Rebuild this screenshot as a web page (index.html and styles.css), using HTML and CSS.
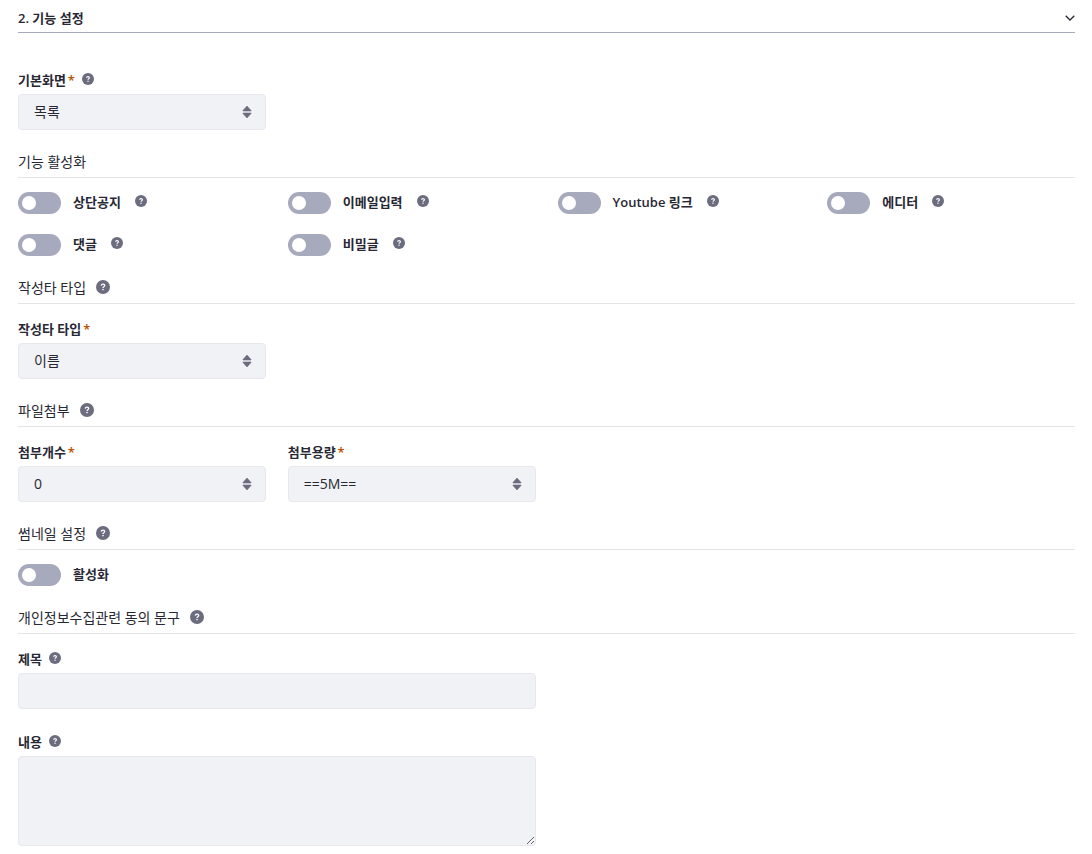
FILE: index.html
```
<!DOCTYPE html>
<html lang="ko">
<head>
<meta charset="utf-8">
<title>기능 설정</title>
<meta name="viewport" content="width=device-width, initial-scale=1">
<link rel="stylesheet" href="styles.css">
</head>
<body>
<svg class="sprite" aria-hidden="true">
  <symbol id="help" viewBox="0 0 14 14">
    <circle cx="7" cy="7" r="7" fill="#6b6c7e"/>
    <path d="M5.300 5.600C5.400 4.600 6.100 4.200 7 4.200S8.700 4.700 8.700 5.600C8.700 6.700 7 6.700 7 7.900" fill="none" stroke="#fff" stroke-width="1.300"/>
    <circle cx="7" cy="9.600" r=".8" fill="#fff"/>
  </symbol>
  <symbol id="carets" viewBox="0 0 10 14">
    <path d="M5 1 9 5.500V6H1v-.5zM5 13 9 8.500V8H1v.5z" fill="#6b6c7e" stroke="#6b6c7e" stroke-width=".6" stroke-linejoin="round"/>
  </symbol>
</svg>
<form class="panel">
  <button class="panel-header" type="button" aria-expanded="true">
    <span>2. 기능 설정</span>
    <svg class="chevron" viewBox="0 0 10 6" aria-hidden="true"><path d="M.7.7 5 5 9.300.7" fill="none" stroke="#272833" stroke-width="1.300"/></svg>
  </button>

  <div class="field-grid first">
    <div class="field">
      <label class="label" for="view">기본화면<span class="required">*</span><svg class="help"><use href="#help"/></svg></label>
      <div class="select-wrap"><select class="control" id="view"><option>목록</option></select><svg class="carets"><use href="#carets"/></svg></div>
    </div>
  </div>

  <h3 class="heading">기능 활성화</h3>
  <div class="toggle-grid">
    <label class="toggle"><input class="switch" type="checkbox"><span class="toggle-text">상단공지<svg class="help"><use href="#help"/></svg></span></label>
    <label class="toggle"><input class="switch" type="checkbox"><span class="toggle-text">이메일입력<svg class="help"><use href="#help"/></svg></span></label>
    <label class="toggle"><input class="switch" type="checkbox"><span class="toggle-text">Youtube 링크<svg class="help"><use href="#help"/></svg></span></label>
    <label class="toggle"><input class="switch" type="checkbox"><span class="toggle-text">에디터<svg class="help"><use href="#help"/></svg></span></label>
    <label class="toggle"><input class="switch" type="checkbox"><span class="toggle-text">댓글<svg class="help"><use href="#help"/></svg></span></label>
    <label class="toggle"><input class="switch" type="checkbox"><span class="toggle-text">비밀글<svg class="help"><use href="#help"/></svg></span></label>
  </div>

  <h3 class="heading">작성타 타입<svg class="help"><use href="#help"/></svg></h3>
  <div class="field-grid">
    <div class="field">
      <label class="label" for="writer">작성타 타입<span class="required">*</span></label>
      <div class="select-wrap"><select class="control" id="writer"><option>이름</option></select><svg class="carets"><use href="#carets"/></svg></div>
    </div>
  </div>

  <h3 class="heading">파일첨부<svg class="help"><use href="#help"/></svg></h3>
  <div class="field-grid">
    <div class="field">
      <label class="label" for="count">첨부개수<span class="required">*</span></label>
      <div class="select-wrap"><select class="control" id="count"><option>0</option></select><svg class="carets"><use href="#carets"/></svg></div>
    </div>
    <div class="field">
      <label class="label" for="size">첨부용량<span class="required">*</span></label>
      <div class="select-wrap"><select class="control" id="size"><option>==5M==</option></select><svg class="carets"><use href="#carets"/></svg></div>
    </div>
  </div>

  <h3 class="heading">썸네일 설정<svg class="help"><use href="#help"/></svg></h3>
  <div class="toggle-grid">
    <label class="toggle"><input class="switch" type="checkbox"><span class="toggle-text">활성화</span></label>
  </div>

  <h3 class="heading">개인정보수집관련 동의 문구<svg class="help"><use href="#help"/></svg></h3>
  <div class="field-grid">
    <div class="field wide">
      <label class="label" for="title">제목<svg class="help"><use href="#help"/></svg></label>
      <input class="control" id="title" type="text">
    </div>
    <div class="field wide">
      <label class="label" for="content">내용<svg class="help"><use href="#help"/></svg></label>
      <textarea class="control area" id="content"></textarea>
    </div>
  </div>
</form>
</body>
</html>
```
FILE: styles.css
```
* { box-sizing: border-box; }
body {
  margin: 0;
  background: #fff;
  color: #272833;
  font-family: "Open Sans", "Noto Sans CJK KR", sans-serif;
  font-size: 14px;
}
.sprite { display: none; }
.panel { padding: 4px 17px 8px 18px; }
.panel-header {
  display: flex;
  align-items: center;
  justify-content: space-between;
  width: 100%;
  height: 29px;
  padding: 0;
  border: 0;
  border-bottom: 1px solid #a7a9bc;
  background: none;
  color: inherit;
  font: 600 13px/18px "Open Sans", "Noto Sans CJK KR", sans-serif;
}
.chevron { width: 10px; height: 6px; }
.field-grid, .toggle-grid {
  display: grid;
  grid-template-columns: repeat(4, minmax(0, 1fr));
  column-gap: 22px;
}
.field-grid { row-gap: 24px; padding-top: 16px; }
.field-grid.first { padding-top: 38px; }
.toggle-grid { row-gap: 20px; padding-top: 14px; }
.wide { grid-column: 1 / span 2; }
.label {
  display: flex;
  align-items: center;
  height: 18px;
  margin-bottom: 5px;
  font-size: 13px;
  font-weight: 600;
  line-height: 18px;
}
.required { margin-left: 2px; color: #b95000; }
.help { flex: none; width: 12px; height: 12px; margin: 0 0 2px 7px; }
.select-wrap { position: relative; }
.control {
  display: block;
  width: 100%;
  height: 36px;
  padding: 0 15px;
  border: 1px solid #e7e7ed;
  border-radius: 4px;
  background: #f1f2f5;
  color: #272833;
  appearance: none;
  font: 400 14px/20px "Open Sans", "Noto Sans CJK KR", sans-serif;
}
.area { height: 90px; padding: 8px 15px; resize: vertical; }
.carets {
  position: absolute;
  top: 11px;
  right: 14px;
  width: 10px;
  height: 14px;
  pointer-events: none;
}
.heading {
  display: flex;
  align-items: center;
  height: 26px;
  margin: 22px 0 0;
  padding-bottom: 6px;
  border-bottom: 1px solid #e4e4e6;
  font-size: 14px;
  font-weight: 400;
  line-height: 18px;
}
.heading .help { width: 14px; height: 14px; margin-left: 10px; }
.toggle { display: flex; align-items: center; height: 22px; }
.switch {
  flex: none;
  appearance: none;
  width: 43px;
  height: 22px;
  margin: 0 12px 0 0;
  padding: 4px;
  border-radius: 11px;
  background: #a7a9bc;
}
.switch::before {
  content: "";
  display: block;
  width: 14px;
  height: 14px;
  border-radius: 50%;
  background: #fff;
}
.switch:checked { background: #0b5fff; }
.switch:checked::before { margin-left: auto; }
.toggle-text {
  display: flex;
  align-items: center;
  height: 18px;
  margin-bottom: 2px;
  font-size: 13px;
  font-weight: 600;
  line-height: 18px;
}
.toggle-text .help { margin: 0 0 2px 14px; }
```
